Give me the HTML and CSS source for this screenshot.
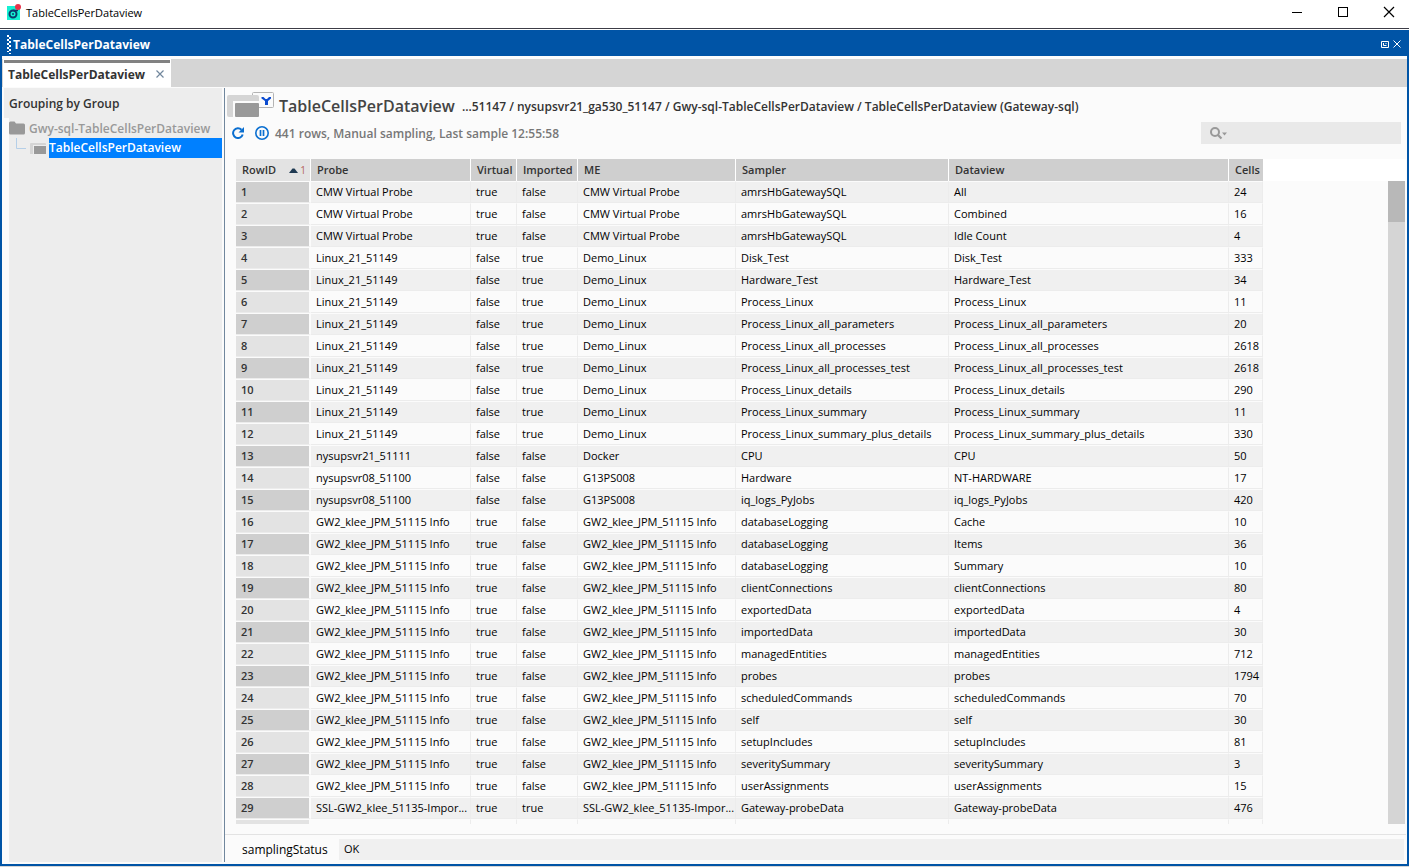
FILE: index.html
```
<!DOCTYPE html>
<html lang="en">
<head>
    <meta charset="UTF-8">
    <meta name="viewport" content="width=device-width, initial-scale=1.0">
    <title>TableCellsPerDataview</title>
    <link rel="stylesheet" href="styles.css">
</head>
<body>
    <!-- window title bar -->
    <header class="titlebar">
        <svg class="app-icon" width="15" height="17" viewBox="0 0 15 17">
            <rect x="0" y="2" width="13" height="14" fill="#14f0d2"/>
            <circle cx="6" cy="10" r="3.500" fill="none" stroke="#0a3a6b" stroke-width="2"/>
            <circle cx="6" cy="10" r="1" fill="#0a3a6b"/>
            <path d="M6 6.500h5" stroke="#0a3a6b" stroke-width="1.500"/>
            <circle cx="11" cy="3" r="3" fill="#e8344a"/>
        </svg>
        <span class="app-name">TableCellsPerDataview</span>
        <div class="window-buttons">
            <button aria-label="Minimize"><svg width="12" height="12" viewBox="0 0 12 12"><path d="M1 6.500h10" stroke="#000" fill="none"/></svg></button>
            <button aria-label="Maximize"><svg width="12" height="12" viewBox="0 0 12 12"><rect x="1.500" y="1.500" width="9" height="9" stroke="#000" fill="none"/></svg></button>
            <button aria-label="Close"><svg width="12" height="12" viewBox="0 0 12 12"><path d="M1 1l10 10M11 1L1 11" stroke="#000" stroke-width="1.200" fill="none"/></svg></button>
        </div>
    </header>

    <div class="frame">
        <div class="dockbar">
            <svg class="grip" width="4" height="19" viewBox="0 0 4 19">
                <path d="M1 0v17" stroke="#fff" stroke-width="2" stroke-dasharray="2 2"/>
                <path d="M3 2v17" stroke="#fff" stroke-width="2" stroke-dasharray="2 2"/>
            </svg>
            <span class="dock-title">TableCellsPerDataview</span>
            <div class="dock-buttons">
                <button aria-label="Float"><svg width="8" height="7" viewBox="0 0 8 7"><path d="M.5.5h7v6h-7z" stroke="#fff" fill="none"/><path d="M2.500 2v2.500H5.500M4.500 2.500h1" stroke="#fff" fill="none"/></svg></button>
                <button aria-label="Close panel"><svg width="8" height="8" viewBox="0 0 8 8"><path d="M.5.5l7 7M7.500.5l-7 7" stroke="#fff" fill="none"/></svg></button>
            </div>
        </div>

        <div class="tabs">
            <div class="tab">
                <span>TableCellsPerDataview</span>
                <button aria-label="Close tab"><svg width="8" height="8" viewBox="0 0 8 8"><path d="M.5.5l7 7M7.500.5l-7 7" stroke="#71879d" stroke-width="1.200" fill="none"/></svg></button>
            </div>
        </div>

        <div class="content">
            <!-- navigation tree -->
            <aside class="sidebar">
                <h2>Grouping by Group</h2>
                <div class="tree">
                    <div class="tree-row folder">
                        <svg width="16" height="14" viewBox="0 0 16 14"><path d="M0 2q0-1.500 1.500-1.500h4L7 2.500h7.500q1.500 0 1.500 1.500v8q0 1.500-1.500 1.500h-13Q0 13.500 0 12z" fill="#999"/></svg>
                        <span>Gwy-sql-TableCellsPerDataview</span>
                    </div>
                    <div class="tree-row leaf">
                        <svg class="branch" width="10" height="20" viewBox="0 0 10 20"><path d="M.5 0v10.500H10" stroke="#b5cfe8" fill="none"/></svg>
                        <svg class="view-icon" width="16" height="12" viewBox="0 0 16 12"><path d="M0 2q0-1 1-1h14q1 0 1 1v1H3v9H0z" fill="#d5d5d5"/><rect x="4" y="4" width="12" height="8" fill="#999"/></svg>
                        <a href="#" class="selected">TableCellsPerDataview</a>
                    </div>
                </div>
            </aside>

            <main class="main">
                <div class="heading">
                    <svg width="48" height="26" viewBox="0 0 48 26">
                        <rect x="25.500" y=".5" width="21" height="15" rx="1" fill="#fbfbfb" stroke="#b4b4b4"/>
                        <path d="M0 5q0-2 2-2h28q2 0 2 2v4H6v16H2q-2 0-2-2z" fill="#d5d5d5"/>
                        <rect x="6" y="9" width="26" height="16" fill="#fbfbfb"/>
                        <rect x="8" y="11" width="24" height="14" rx="1" fill="#999"/>
                        <path d="M34.500 5h2l2 2h1.500l2-2h2v1.500L41 9v4h-3V9l-3.500-2.500z" fill="#0b4bd0"/>
                    </svg>
                    <h1>TableCellsPerDataview</h1>
                    <span class="path">...51147 / nysupsvr21_ga530_51147 / Gwy-sql-TableCellsPerDataview / TableCellsPerDataview (Gateway-sql)</span>
                </div>

                <div class="toolbar">
                    <button aria-label="Refresh"><svg width="12" height="12" viewBox="0 0 12 12"><path d="M10.700 7.500A4.900 4.900 0 1 1 9.500 2.700" stroke="#0b6fd0" stroke-width="2" fill="none"/><path d="M12 0v5.500H6.500z" fill="#0b6fd0"/></svg></button>
                    <button aria-label="Pause"><svg width="14" height="14" viewBox="0 0 14 14"><circle cx="7" cy="7" r="6.200" stroke="#0b6fd0" stroke-width="1.600" fill="none"/><path d="M5.500 4v6M8.500 4v6" stroke="#0b6fd0" stroke-width="1.700"/></svg></button>
                    <span class="summary">441 rows, Manual sampling, Last sample 12:55:58</span>
                    <label class="search">
                        <svg width="18" height="13" viewBox="0 0 18 13"><circle cx="5" cy="5" r="4" stroke="#999" stroke-width="2" fill="none"/><path d="M8 8l3.500 3.500" stroke="#999" stroke-width="2.200"/><path d="M12 5.500h5l-2.500 3z" fill="#999"/></svg>
                        <input type="text" aria-label="Search">
                    </label>
                </div>

                <div class="grid">
                    <div class="grid-view">
                        <table>
                            <colgroup>
                                <col class="c-row"><col class="c-probe"><col class="c-virtual"><col class="c-imported"><col class="c-me"><col class="c-sampler"><col class="c-dataview"><col class="c-cells">
                            </colgroup>
                            <thead>
                                <tr>
                                    <th class="sorted">
                                        <div class="sort-head">RowID <span class="sort"><svg width="9" height="5" viewBox="0 0 9 5"><path d="M0 5l3.500-4.500h2L9 5z" fill="#1f3a52"/></svg><sup>1</sup></span></div>
                                    </th>
                                    <th>Probe</th><th>Virtual</th><th>Imported</th><th>ME</th><th>Sampler</th><th>Dataview</th><th>Cells</th>
                                </tr>
                            </thead>
                            <tbody>
                                <tr><th>1</th><td>CMW Virtual Probe</td><td>true</td><td>false</td><td>CMW Virtual Probe</td><td>amrsHbGatewaySQL</td><td>All</td><td>24</td></tr>
                                <tr><th>2</th><td>CMW Virtual Probe</td><td>true</td><td>false</td><td>CMW Virtual Probe</td><td>amrsHbGatewaySQL</td><td>Combined</td><td>16</td></tr>
                                <tr><th>3</th><td>CMW Virtual Probe</td><td>true</td><td>false</td><td>CMW Virtual Probe</td><td>amrsHbGatewaySQL</td><td>Idle Count</td><td>4</td></tr>
                                <tr><th>4</th><td>Linux_21_51149</td><td>false</td><td>true</td><td>Demo_Linux</td><td>Disk_Test</td><td>Disk_Test</td><td>333</td></tr>
                                <tr><th>5</th><td>Linux_21_51149</td><td>false</td><td>true</td><td>Demo_Linux</td><td>Hardware_Test</td><td>Hardware_Test</td><td>34</td></tr>
                                <tr><th>6</th><td>Linux_21_51149</td><td>false</td><td>true</td><td>Demo_Linux</td><td>Process_Linux</td><td>Process_Linux</td><td>11</td></tr>
                                <tr><th>7</th><td>Linux_21_51149</td><td>false</td><td>true</td><td>Demo_Linux</td><td>Process_Linux_all_parameters</td><td>Process_Linux_all_parameters</td><td>20</td></tr>
                                <tr><th>8</th><td>Linux_21_51149</td><td>false</td><td>true</td><td>Demo_Linux</td><td>Process_Linux_all_processes</td><td>Process_Linux_all_processes</td><td>2618</td></tr>
                                <tr><th>9</th><td>Linux_21_51149</td><td>false</td><td>true</td><td>Demo_Linux</td><td>Process_Linux_all_processes_test</td><td>Process_Linux_all_processes_test</td><td>2618</td></tr>
                                <tr><th>10</th><td>Linux_21_51149</td><td>false</td><td>true</td><td>Demo_Linux</td><td>Process_Linux_details</td><td>Process_Linux_details</td><td>290</td></tr>
                                <tr><th>11</th><td>Linux_21_51149</td><td>false</td><td>true</td><td>Demo_Linux</td><td>Process_Linux_summary</td><td>Process_Linux_summary</td><td>11</td></tr>
                                <tr><th>12</th><td>Linux_21_51149</td><td>false</td><td>true</td><td>Demo_Linux</td><td>Process_Linux_summary_plus_details</td><td>Process_Linux_summary_plus_details</td><td>330</td></tr>
                                <tr><th>13</th><td>nysupsvr21_51111</td><td>false</td><td>false</td><td>Docker</td><td>CPU</td><td>CPU</td><td>50</td></tr>
                                <tr><th>14</th><td>nysupsvr08_51100</td><td>false</td><td>false</td><td>G13PS008</td><td>Hardware</td><td>NT-HARDWARE</td><td>17</td></tr>
                                <tr><th>15</th><td>nysupsvr08_51100</td><td>false</td><td>false</td><td>G13PS008</td><td>iq_logs_PyJobs</td><td>iq_logs_PyJobs</td><td>420</td></tr>
                                <tr><th>16</th><td>GW2_klee_JPM_51115 Info</td><td>true</td><td>false</td><td>GW2_klee_JPM_51115 Info</td><td>databaseLogging</td><td>Cache</td><td>10</td></tr>
                                <tr><th>17</th><td>GW2_klee_JPM_51115 Info</td><td>true</td><td>false</td><td>GW2_klee_JPM_51115 Info</td><td>databaseLogging</td><td>Items</td><td>36</td></tr>
                                <tr><th>18</th><td>GW2_klee_JPM_51115 Info</td><td>true</td><td>false</td><td>GW2_klee_JPM_51115 Info</td><td>databaseLogging</td><td>Summary</td><td>10</td></tr>
                                <tr><th>19</th><td>GW2_klee_JPM_51115 Info</td><td>true</td><td>false</td><td>GW2_klee_JPM_51115 Info</td><td>clientConnections</td><td>clientConnections</td><td>80</td></tr>
                                <tr><th>20</th><td>GW2_klee_JPM_51115 Info</td><td>true</td><td>false</td><td>GW2_klee_JPM_51115 Info</td><td>exportedData</td><td>exportedData</td><td>4</td></tr>
                                <tr><th>21</th><td>GW2_klee_JPM_51115 Info</td><td>true</td><td>false</td><td>GW2_klee_JPM_51115 Info</td><td>importedData</td><td>importedData</td><td>30</td></tr>
                                <tr><th>22</th><td>GW2_klee_JPM_51115 Info</td><td>true</td><td>false</td><td>GW2_klee_JPM_51115 Info</td><td>managedEntities</td><td>managedEntities</td><td>712</td></tr>
                                <tr><th>23</th><td>GW2_klee_JPM_51115 Info</td><td>true</td><td>false</td><td>GW2_klee_JPM_51115 Info</td><td>probes</td><td>probes</td><td>1794</td></tr>
                                <tr><th>24</th><td>GW2_klee_JPM_51115 Info</td><td>true</td><td>false</td><td>GW2_klee_JPM_51115 Info</td><td>scheduledCommands</td><td>scheduledCommands</td><td>70</td></tr>
                                <tr><th>25</th><td>GW2_klee_JPM_51115 Info</td><td>true</td><td>false</td><td>GW2_klee_JPM_51115 Info</td><td>self</td><td>self</td><td>30</td></tr>
                                <tr><th>26</th><td>GW2_klee_JPM_51115 Info</td><td>true</td><td>false</td><td>GW2_klee_JPM_51115 Info</td><td>setupIncludes</td><td>setupIncludes</td><td>81</td></tr>
                                <tr><th>27</th><td>GW2_klee_JPM_51115 Info</td><td>true</td><td>false</td><td>GW2_klee_JPM_51115 Info</td><td>severitySummary</td><td>severitySummary</td><td>3</td></tr>
                                <tr><th>28</th><td>GW2_klee_JPM_51115 Info</td><td>true</td><td>false</td><td>GW2_klee_JPM_51115 Info</td><td>userAssignments</td><td>userAssignments</td><td>15</td></tr>
                                <tr><th>29</th><td>SSL-GW2_klee_51135-Impor...</td><td>true</td><td>true</td><td>SSL-GW2_klee_51135-Impor...</td><td>Gateway-probeData</td><td>Gateway-probeData</td><td>476</td></tr>
                                <tr><th></th><td></td><td></td><td></td><td></td><td></td><td></td><td></td></tr>
                            </tbody>
                        </table>
                    </div>
                    <div class="scroll">
                        <div class="scroll-track"><div class="scroll-thumb"></div></div>
                    </div>
                </div>

                <footer class="status">
                    <span class="status-name">samplingStatus</span>
                    <span class="status-value">OK</span>
                </footer>
            </main>
        </div>
    </div>
</body>
</html>
```
FILE: styles.css
```
* {
    box-sizing: border-box;
}

body {
    margin: 0;
    height: 100vh;
    display: flex;
    flex-direction: column;
    overflow: hidden;
    font-family: "Open Sans", "Noto Sans", sans-serif;
    font-size: 11px;
    color: #000;
    background: #fff;
    border-bottom: 1px solid #d5d5d5;
}

button {
    display: flex;
    padding: 0;
    border: none;
    background: none;
    cursor: pointer;
}

svg {
    display: block;
    flex: none;
}

h1, h2 {
    margin: 0;
    font-weight: 600;
}

/* title bar */
.titlebar {
    display: flex;
    align-items: center;
    flex: none;
    height: 29px;
    padding: 0 14px 4px 7px;
    border-bottom: 1px solid #3c3c46;
}

.app-name {
    margin-left: 4px;
    font-size: 11px;
}

.window-buttons {
    display: flex;
    gap: 34px;
    margin-left: auto;
}

/* docked panel */
.frame {
    flex: 1;
    min-height: 0;
    display: flex;
    flex-direction: column;
    margin-top: 1px;
    border: 2px solid #0054a6;
    border-top: none;
    background: #fbfbfb;
}

.dockbar {
    display: flex;
    align-items: center;
    flex: none;
    height: 26px;
    padding: 2px 6px 0 5px;
    background: #0054a6;
    color: #fff;
}

.dock-title {
    margin-left: 2px;
    font-size: 12px;
    font-weight: 700;
}

.dock-buttons {
    display: flex;
    align-items: center;
    gap: 4px;
    margin-left: auto;
}

.tabs {
    flex: none;
    height: 28px;
    margin-top: 3px;
    padding-left: 1px;
    background: #d5d5d5;
}

.tab {
    display: flex;
    align-items: center;
    justify-content: space-between;
    width: 168px;
    height: 28px;
    padding: 0 6px 2px 4px;
    border: 1px solid #fff;
    border-bottom: none;
    background: linear-gradient(#828282 3px, #fff 3px);
    color: #333;
    font-size: 12px;
    font-weight: 700;
    padding-top: 3px;
}

.content {
    flex: 1;
    min-height: 0;
    display: flex;
    padding: 1px 1px 2px 2px;
}

/* sidebar */
.sidebar {
    flex: none;
    width: 221px;
    display: flex;
    flex-direction: column;
    padding-right: 2px;
    border-right: 1px solid #71879d;
    font-size: 12px;
    color: #333;
}

.sidebar h2 {
    padding: 2px 5px 0;
    font-size: 12px;
    line-height: 28px;
    background: #ededed;
}

.tree {
    flex: 1;
    margin-left: 5px;
    background: #ededed;
}

.tree-row {
    display: flex;
    align-items: center;
    height: 20px;
    font-weight: 600;
    white-space: nowrap;
}

.folder {
    gap: 4px;
    color: #999;
}

.view-icon {
    margin: 0 3px 0 4px;
}

.branch {
    margin-left: 7px;
}

.selected {
    flex: 1;
    line-height: 20px;
    color: #fff;
    background: #0080ff;
    text-decoration: none;
}

/* dataview */
.main {
    flex: 1;
    min-width: 0;
    display: flex;
    flex-direction: column;
}

.heading {
    display: flex;
    align-items: center;
    flex: none;
    height: 34px;
    padding: 2px 2px 0;
    white-space: nowrap;
}

.heading svg {
    margin-bottom: 2px;
}

.heading h1 {
    margin-left: 4px;
    font-size: 16px;
    color: #444;
}

.path {
    margin-left: 7px;
    font-size: 12px;
    font-weight: 600;
    color: #333;
}

.toolbar {
    display: flex;
    align-items: center;
    flex: none;
    height: 22px;
    padding: 0 5px 0 7px;
}

.toolbar button + button {
    margin-left: 11px;
}

.summary {
    margin-left: 6px;
    font-size: 12px;
    font-weight: 600;
    color: #777;
}

.search {
    display: flex;
    align-items: center;
    width: 200px;
    height: 22px;
    margin-left: auto;
    padding-left: 9px;
    background: #e9e9e9;
}

.search input {
    flex: 1;
    min-width: 0;
    border: none;
    outline: none;
    background: none;
    font: inherit;
}

.grid {
    flex: 1;
    min-height: 0;
    display: flex;
    margin: 15px 0 10px 11px;
}

.grid-view {
    flex: 1;
    min-width: 0;
    overflow: hidden;
    background: linear-gradient(#fff 22px, #fbfbfb 22px);
}

table {
    table-layout: fixed;
    width: 1027px;
    border-collapse: separate;
    border-spacing: 0;
}

.c-row { width: 75px; }
.c-probe { width: 160px; }
.c-virtual { width: 46px; }
.c-imported { width: 61px; }
.c-me { width: 158px; }
.c-sampler { width: 213px; }
.c-dataview { width: 280px; }
.c-cells { width: 34px; }

th, td {
    height: 22px;
    padding: 0 0 0 5px;
    border-right: 2px solid #fbfbfb;
    border-top: 1px solid #fbfbfb;
    border-bottom: 1px solid #ececec;
    line-height: 20px;
    text-align: left;
    white-space: nowrap;
}

td {
    border-right: 1px solid #ececec;
}

thead th {
    padding-left: 6px;
    border-right: 1px solid #fff;
    border-top: none;
    border-bottom: none;
    background: #cfcfcf;
    color: #333;
    font-weight: 600;
}

thead th:last-child {
    border-right: none;
}

thead .sorted {
    background: #e3e3e3;
}

.sort-head, .sort {
    display: flex;
    align-items: center;
    justify-content: space-between;
}

.sort {
    gap: 2px;
    padding-right: 4px;
}

.sort sup {
    font-size: 10px;
    font-weight: 400;
    line-height: 14px;
    color: #b5655c;
    align-self: flex-start;
}

tbody th {
    background: #e3e3e3;
    color: #333;
    font-weight: 600;
}

tbody tr:nth-child(odd) td {
    background: #f0f0f0;
}

tbody tr:nth-child(odd) th {
    background: #cfcfcf;
}

.scroll {
    flex: none;
    width: 18px;
    display: flex;
    padding-top: 22px;
    background: linear-gradient(#fff 22px, #fbfbfb 22px);
}

.scroll-track {
    width: 17px;
    background: #d5d5d5;
}

.scroll-thumb {
    height: 41px;
    background: #b8b8b8;
}

/* sampling status */
.status {
    display: flex;
    align-items: center;
    flex: none;
    height: 28px;
    padding: 2px 2px 0 17px;
    border-top: 1px solid #e3e3e3;
}

.status-name {
    width: 97px;
    font-size: 12px;
}

.status-value {
    flex: 1;
    height: 21px;
    padding-left: 5px;
    line-height: 20px;
    background: #f0f0f0;
}
```
